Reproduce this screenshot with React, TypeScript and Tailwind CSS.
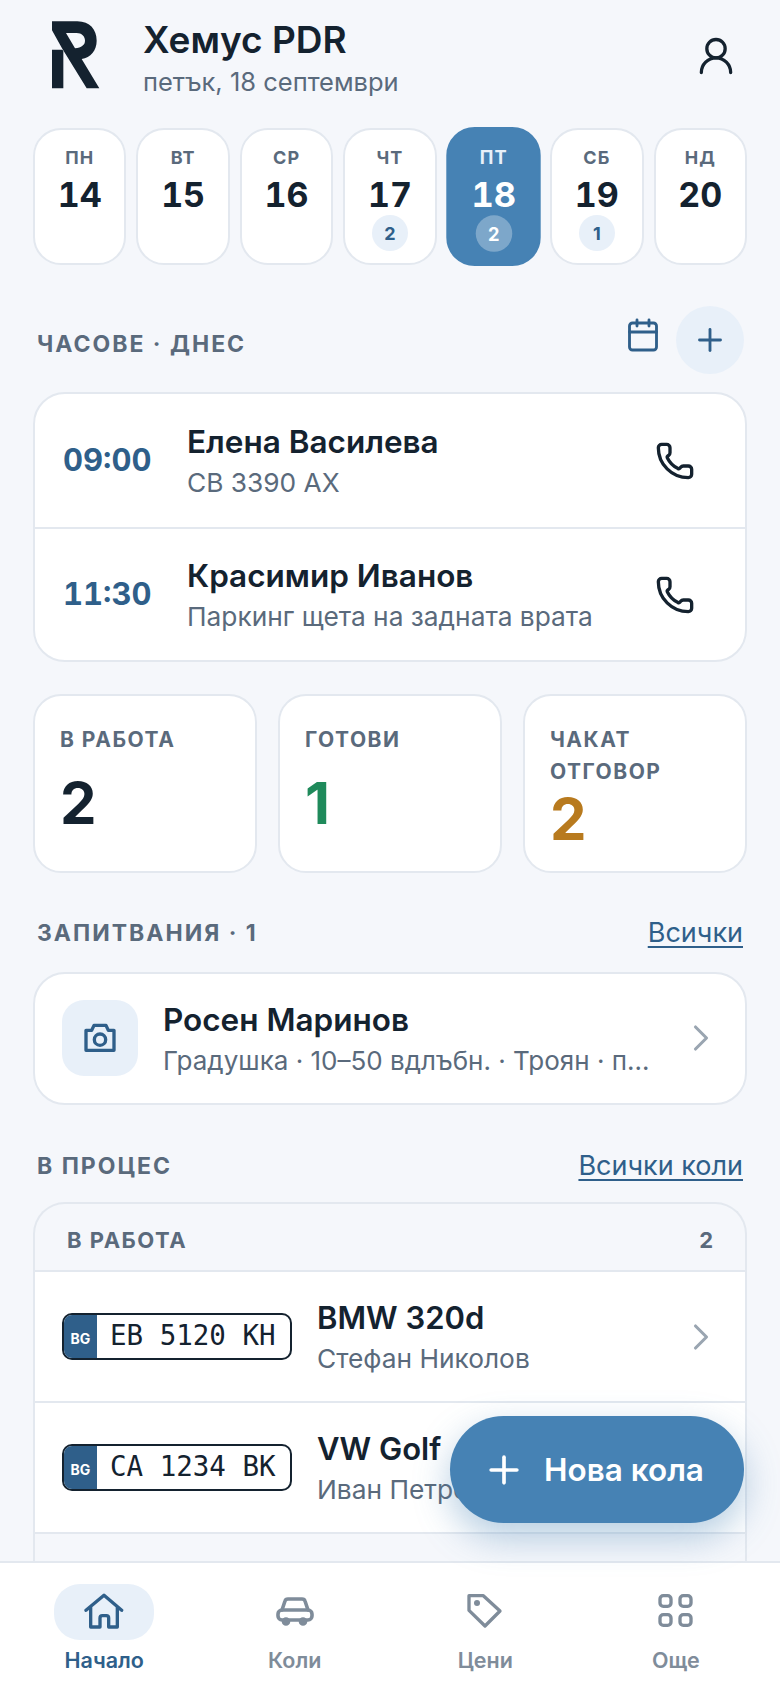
import React from "react";
import { Calendar, ChevronRight, Phone, Plus, UserRound } from "lucide-react";

const days = [
  { name: "ПН", num: 14, count: 0 },
  { name: "ВТ", num: 15, count: 0 },
  { name: "СР", num: 16, count: 0 },
  { name: "ЧТ", num: 17, count: 2 },
  { name: "ПТ", num: 18, count: 2, active: true },
  { name: "СБ", num: 19, count: 1 },
  { name: "НД", num: 20, count: 0 },
];

function HomeIcon() {
  return (
    <svg width="40" height="40" viewBox="42 20 120 120" fill="none" stroke="currentColor" strokeWidth="10" strokeLinecap="round" strokeLinejoin="round">
      <path d="M48 75L102 30L155 75M62 65V125H90V98Q90 91 97 91H109Q116 91 116 98V125H142V65" />
    </svg>
  );
}

function CarIcon() {
  return (
    <svg width="40" height="40" viewBox="0 0 40 40" fill="none" stroke="currentColor" strokeWidth="3.600" strokeLinecap="round" strokeLinejoin="round">
      <path d="M7 18L10 9Q10.500 7 13 7H27Q29.500 7 30 9L33 18" />
      <rect x="3" y="18" width="34" height="10" rx="4" />
      <circle cx="11" cy="29.500" r="2.500" fill="currentColor" />
      <circle cx="28" cy="29.500" r="2.500" fill="currentColor" />
    </svg>
  );
}

function TagIcon() {
  return (
    <svg width="40" height="40" viewBox="80 25 120 120" fill="none" stroke="currentColor" strokeWidth="10" strokeLinejoin="round">
      <path d="M92 36H135L185 82L140 127L92 80Z" />
      <circle cx="116" cy="58" r="9" fill="currentColor" stroke="none" />
    </svg>
  );
}

function GridIcon() {
  return (
    <svg width="40" height="40" viewBox="650 25 120 120" fill="none" stroke="currentColor" strokeWidth="10">
      <rect x="662" y="36" width="33" height="32" rx="10" />
      <rect x="722" y="36" width="33" height="32" rx="10" />
      <rect x="662" y="93" width="33" height="32" rx="10" />
      <rect x="722" y="93" width="33" height="32" rx="10" />
    </svg>
  );
}

function CameraIcon() {
  return (
    <svg width="40" height="40" viewBox="30 25 120 120" fill="none" stroke="#2f5f8a" strokeWidth="10" strokeLinejoin="round">
      <path d="M48 62H65L72 47H108L115 62H132V122H48Z" />
      <circle cx="90" cy="90" r="17" />
    </svg>
  );
}

function Logo() {
  return (
    <svg width="52" height="72" viewBox="60 30 156 216" fill="#14222f" className="shrink-0">
      <path
        fillRule="evenodd"
        d="M66 37H142C180 37 200 62 200 95C200 125 182 145 155 150L208 238H170L96 118L66 64ZM108 72L135 118C155 115 165 108 165 95C165 82 155 72 140 72Z"
      />
      <path d="M66 122H97L100 126V238H66Z" />
    </svg>
  );
}

function SectionTitle({ children }: { children: React.ReactNode }) {
  return <h2 className="text-[23px] font-bold tracking-[2px] text-[#5a6a7c]">{children}</h2>;
}

function Plate({ text }: { text: string }) {
  return (
    <div className="flex h-[47px] w-[230px] shrink-0 overflow-hidden rounded-[10px] border-2 border-[#14222f] bg-white">
      <div className="flex w-[33px] items-center justify-center bg-[#2f5f8a] pt-[3px] text-[14px] font-bold text-white">BG</div>
      <div className="flex-1 pl-[13px] font-['DejaVu_Sans_Mono',monospace] text-[27.500px] leading-[41px] whitespace-pre text-[#14222f]">{text}</div>
    </div>
  );
}

function NavItem({ label, active, icon }: { label: string; active?: boolean; icon: React.ReactNode }) {
  return (
    <div className={`flex flex-col items-center ${active ? "text-[#2f5f8a]" : "text-[#7f8c9a]"}`}>
      <div className={`flex h-[56px] w-[100px] items-center justify-center rounded-[26px] ${active ? "bg-[#e8f0f9]" : ""}`}>{icon}</div>
      <span className="mt-[7px] text-[21.500px] leading-[26px] font-semibold">{label}</span>
    </div>
  );
}

export default function App() {
  return (
    <div className="relative flex h-[1688px] w-[780px] flex-col overflow-hidden bg-[#f5f7fb] font-['Inter',sans-serif] text-[#14222f]">
      <main className="min-h-0 flex-1 overflow-hidden px-[33px]">
        {/* header */}
        <header className="flex h-[108px] items-center pt-[2px] pl-[17px]">
          <Logo />
          <div className="mt-[4px] ml-[41px] flex-1">
            <h1 className="text-[37px] leading-[44px] font-semibold">Хемус PDR</h1>
            <p className="mt-[5px] text-[25.500px] leading-[30px] text-[#5a6a7c]">петък, 18 септември</p>
          </div>
          <UserRound size={44} strokeWidth={1.8} className="mt-[2px] mr-[9px]" />
        </header>

        {/* week strip */}
        <div className="mt-[20px] grid grid-cols-7 gap-[10px]">
          {days.map((d) => (
            <div
              key={d.num}
              className={`flex h-[137px] flex-col items-center rounded-[28px] border-2 pt-[16px] ${
                d.active ? "scale-[1.015] border-[#4682b4] bg-[#4682b4] text-white" : "border-[#e3e8ef] bg-white"
              }`}
            >
              <span className={`text-[18px] leading-[24px] font-bold tracking-[1px] ${d.active ? "text-[#e8f0f9]" : "text-[#5a6a7c]"}`}>{d.name}</span>
              <span className="mt-[5px] text-[34px] leading-[40px] font-bold tabular-nums">{d.num}</span>
              {d.count > 0 && (
                <span
                  className={`flex h-[36px] w-[36px] items-center justify-center rounded-full text-[18px] font-bold ${
                    d.active ? "bg-white/30 text-white" : "bg-[#e8f0f9] text-[#2f5f8a]"
                  }`}
                >
                  {d.count}
                </span>
              )}
            </div>
          ))}
        </div>

        {/* today */}
        <div className="mt-[41px] flex h-[68px] items-center">
          <div className="flex-1 pt-[8px] pl-[4px]">
            <SectionTitle>ЧАСОВЕ · ДНЕС</SectionTitle>
          </div>
          <Calendar size={36} strokeWidth={1.9} className="mb-[10px] text-[#2f5f8a]" />
          <div className="mr-[3px] ml-[15px] flex h-[68px] w-[68px] items-center justify-center rounded-full bg-[#e8f0f9]">
            <Plus size={36} strokeWidth={1.9} className="text-[#2f5f8a]" />
          </div>
        </div>

        <section className="mt-[18px] overflow-hidden rounded-[32px] border-2 border-[#e3e8ef] bg-white">
          {[
            { time: "09:00", name: "Елена Василева", sub: "СВ 3390 АХ" },
            { time: "11:30", name: "Красимир Иванов", sub: "Паркинг щета на задната врата" },
          ].map((a, i) => (
            <div key={a.time} className={`flex h-[133px] items-center ${i > 0 ? "border-t-2 border-[#e3e8ef]" : ""}`}>
              <span className="ml-[28px] w-[124px] text-[31px] font-bold text-[#2f5f8a] tabular-nums">{a.time}</span>
              <div className="flex-1">
                <div className="text-[31.500px] leading-[40px] font-semibold">{a.name}</div>
                <div className="mt-[5px] text-[26.300px] leading-[32px] text-[#5a6a7c]">{a.sub}</div>
              </div>
              <Phone size={40} strokeWidth={2} className="mr-[50px]" />
            </div>
          ))}
        </section>

        {/* counters */}
        <div className="mt-[32px] grid h-[179px] grid-cols-3 gap-[21px]">
          {[
            { label: "В РАБОТА", value: 2, color: "text-[#14222f]" },
            { label: "ГОТОВИ", value: 1, color: "text-[#1f8a5b]" },
            { label: "ЧАКАТ ОТГОВОР", value: 2, color: "text-[#b87a1e]" },
          ].map((s) => (
            <div key={s.label} className="flex flex-col rounded-[28px] border-2 border-[#e3e8ef] bg-white px-[25px] pt-[28px] pb-[21px]">
              <div className="text-[21px] leading-[32px] font-bold tracking-[1.5px] text-[#5a6a7c]">{s.label}</div>
              <div className={`flex flex-1 items-center text-[58px] leading-[60px] font-bold ${s.color}`}>{s.value}</div>
            </div>
          ))}
        </div>

        {/* inquiries */}
        <div className="mt-[43px] flex items-center justify-between px-[4px]">
          <SectionTitle>ЗАПИТВАНИЯ · 1</SectionTitle>
          <a className="text-[27px] leading-[32px] text-[#2f5f8a] underline underline-offset-4">Всички</a>
        </div>

        <section className="mt-[21px] flex h-[133px] items-center rounded-[32px] border-2 border-[#e3e8ef] bg-white pr-[22px] pl-[27px]">
          <div className="flex h-[76px] w-[76px] shrink-0 items-center justify-center rounded-[22px] bg-[#e8f0f9]">
            <CameraIcon />
          </div>
          <div className="ml-[25px] min-w-0 flex-1">
            <div className="text-[31.500px] leading-[40px] font-semibold">Росен Маринов</div>
            <div className="mt-[5px] truncate pr-[20px] text-[26px] leading-[32px] text-[#5a6a7c]">Градушка · 10–50 вдлъбн. · Троян · п…</div>
          </div>
          <ChevronRight size={44} strokeWidth={1.7} className="shrink-0 text-[#9aa5b1]" />
        </section>

        {/* in progress */}
        <div className="mt-[44px] flex items-center justify-between px-[4px]">
          <SectionTitle>В ПРОЦЕС</SectionTitle>
          <a className="text-[27px] leading-[32px] text-[#2f5f8a] underline underline-offset-4">Всички коли</a>
        </div>

        <section className="mt-[19px] rounded-t-[32px] border-x-2 border-t-2 border-[#e3e8ef]">
          <div className="flex h-[66px] items-center justify-between px-[32px] pt-[6px]">
            <span className="text-[22px] font-bold tracking-[1.5px] text-[#5a6a7c]">В РАБОТА</span>
            <span className="text-[22px] font-bold text-[#5a6a7c]">2</span>
          </div>
          {[
            { plate: "ЕВ 5120 КН", car: "BMW 320d", owner: "Стефан Николов" },
            { plate: "СА 1234 ВК", car: "VW Golf", owner: "Иван Петров" },
          ].map((c) => (
            <div key={c.plate} className="flex h-[131px] items-center border-t-2 border-[#e3e8ef] bg-white pr-[22px] pl-[27px]">
              <Plate text={c.plate} />
              <div className="ml-[25px] flex-1">
                <div className="text-[31px] leading-[40px] font-semibold">{c.car}</div>
                <div className="mt-[5px] text-[26.300px] leading-[32px] text-[#5a6a7c]">{c.owner}</div>
              </div>
              <ChevronRight size={44} strokeWidth={1.7} className="shrink-0 text-[#9aa5b1]" />
            </div>
          ))}
          <div className="h-[40px] border-t-2 border-[#e3e8ef]" />
        </section>
      </main>

      {/* floating action */}
      <button className="absolute top-[1416px] left-[450px] flex h-[107px] w-[294px] items-center justify-center gap-[18px] rounded-full bg-[#4682b4] pr-[8px] text-[31.500px] font-semibold text-white shadow-[0_14px_36px_rgba(70,130,180,0.4)]">
        <Plus size={44} strokeWidth={2} />
        Нова кола
      </button>

      {/* bottom nav */}
      <nav className="grid h-[127px] shrink-0 grid-cols-4 border-t-2 border-[#e3e8ef] bg-white px-[9px] pt-[21px]">
        <NavItem label="Начало" active icon={<HomeIcon />} />
        <NavItem label="Коли" icon={<CarIcon />} />
        <NavItem label="Цени" icon={<TagIcon />} />
        <NavItem label="Още" icon={<GridIcon />} />
      </nav>
    </div>
  );
}
